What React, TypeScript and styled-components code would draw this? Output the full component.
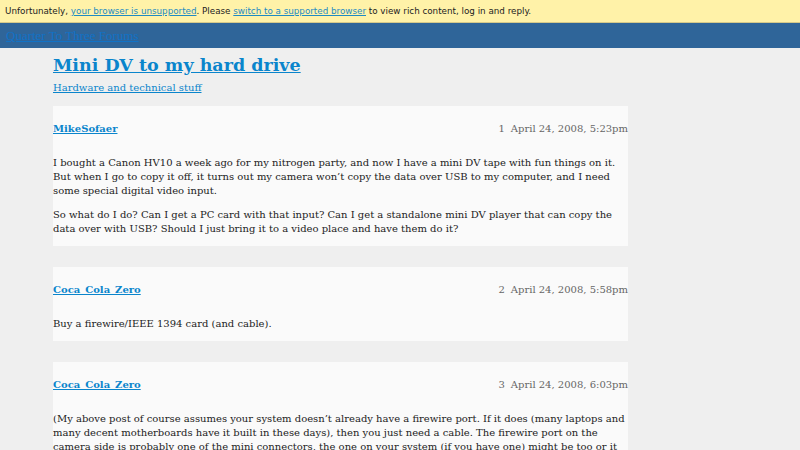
import React from "react";
import styled, { createGlobalStyle } from "styled-components";

const GlobalStyle = createGlobalStyle`
  html, body {
    margin: 0;
    padding: 0;
    background: #efefef;
  }
  body {
    font-family: "DejaVu Serif", serif;
    font-size: 10px;
    color: #222;
  }
`;

const Banner = styled.div`
  background: #fff2a8;
  border-bottom: 1px solid #d6c98a;
  height: 22px;
  line-height: 22px;
  padding: 0 5px;
  font-family: "DejaVu Sans", sans-serif;
  font-size: 8.75px;
  color: #222;
  white-space: nowrap;
  overflow: hidden;
`;

const BannerLink = styled.a`
  color: #1e8bc3;
  text-decoration: underline;
`;

const Header = styled.header`
  background: #2f6599;
  height: 25px;
  line-height: 25px;
  padding: 0 6px;
`;

// logo alt text, rendered in the browser's fallback serif
const SiteLink = styled.a`
  color: #1172c6;
  font-family: "Liberation Serif", serif;
  font-size: 13px;
  text-decoration: underline;
`;

const Main = styled.main`
  width: 575px;
  margin-left: 53px;
`;

const Title = styled.h1`
  margin: 7px 0 0;
  font-size: 17.5px;
  line-height: 20px;
  font-weight: bold;
`;

const TitleLink = styled.a`
  color: #0a85cc;
  text-decoration: underline;
`;

const CategoryRow = styled.div`
  margin-top: 6px;
  line-height: 14px;
`;

const Category = styled.a`
  color: #0a85cc;
  text-decoration: underline;
`;

const Posts = styled.div`
  margin-top: 11px;
`;

const Post = styled.article`
  background: #fafafa;
  padding: 12px 0 10px;
  margin-bottom: 21px;
`;

const PostHeader = styled.div`
  display: flex;
  justify-content: space-between;
  align-items: center;
  height: 20px;
`;

const Author = styled.a`
  color: #0a85cc;
  font-weight: bold;
  text-decoration: underline;
`;

const Meta = styled.span`
  color: #666;
`;

const PostNumber = styled.span`
  margin-right: 6px;
`;

const Body = styled.div`
  margin-top: 18px;
  line-height: 14px;
  color: #222;

  p {
    margin: 0 0 10px;
  }
  p:last-child {
    margin-bottom: 0;
  }
`;

type PostData = {
  author: string;
  number: number;
  date: string;
  paragraphs: string[];
};

const posts: PostData[] = [
  {
    author: "MikeSofaer",
    number: 1,
    date: "April 24, 2008, 5:23pm",
    paragraphs: [
      "I bought a Canon HV10 a week ago for my nitrogen party, and now I have a mini DV tape with fun things on it. But when I go to copy it off, it turns out my camera won\u2019t copy the data over USB to my computer, and I need some special digital video input.",
      "So what do I do? Can I get a PC card with that input? Can I get a standalone mini DV player that can copy the data over with USB? Should I just bring it to a video place and have them do it?",
    ],
  },
  {
    author: "Coca_Cola_Zero",
    number: 2,
    date: "April 24, 2008, 5:58pm",
    paragraphs: ["Buy a firewire/IEEE 1394 card (and cable)."],
  },
  {
    author: "Coca_Cola_Zero",
    number: 3,
    date: "April 24, 2008, 6:03pm",
    paragraphs: [
      "(My above post of course assumes your system doesn\u2019t already have a firewire port. If it does (many laptops and many decent motherboards have it built in these days), then you just need a cable. The firewire port on the camera side is probably one of the mini connectors, the one on your system (if you have one) might be too or it might be the larger one.)",
    ],
  },
];

export default function App() {
  return (
    <>
      <GlobalStyle />
      <Banner>
        Unfortunately, <BannerLink href="#">your browser is unsupported</BannerLink>. Please{" "}
        <BannerLink href="#">switch to a supported browser</BannerLink> to view rich content, log in and reply.
      </Banner>
      <Header>
        <SiteLink href="#">Quarter To Three Forums</SiteLink>
      </Header>
      <Main>
        <Title>
          <TitleLink href="#">Mini DV to my hard drive</TitleLink>
        </Title>
        <CategoryRow>
          <Category href="#">Hardware and technical stuff</Category>
        </CategoryRow>
        <Posts>
          {posts.map((p) => (
            <Post key={p.number}>
              <PostHeader>
                <Author href="#">{p.author}</Author>
                <Meta>
                  <PostNumber>{p.number}</PostNumber>
                  {p.date}
                </Meta>
              </PostHeader>
              <Body>
                {p.paragraphs.map((t, i) => (
                  <p key={i}>{t}</p>
                ))}
              </Body>
            </Post>
          ))}
        </Posts>
      </Main>
    </>
  );
}
